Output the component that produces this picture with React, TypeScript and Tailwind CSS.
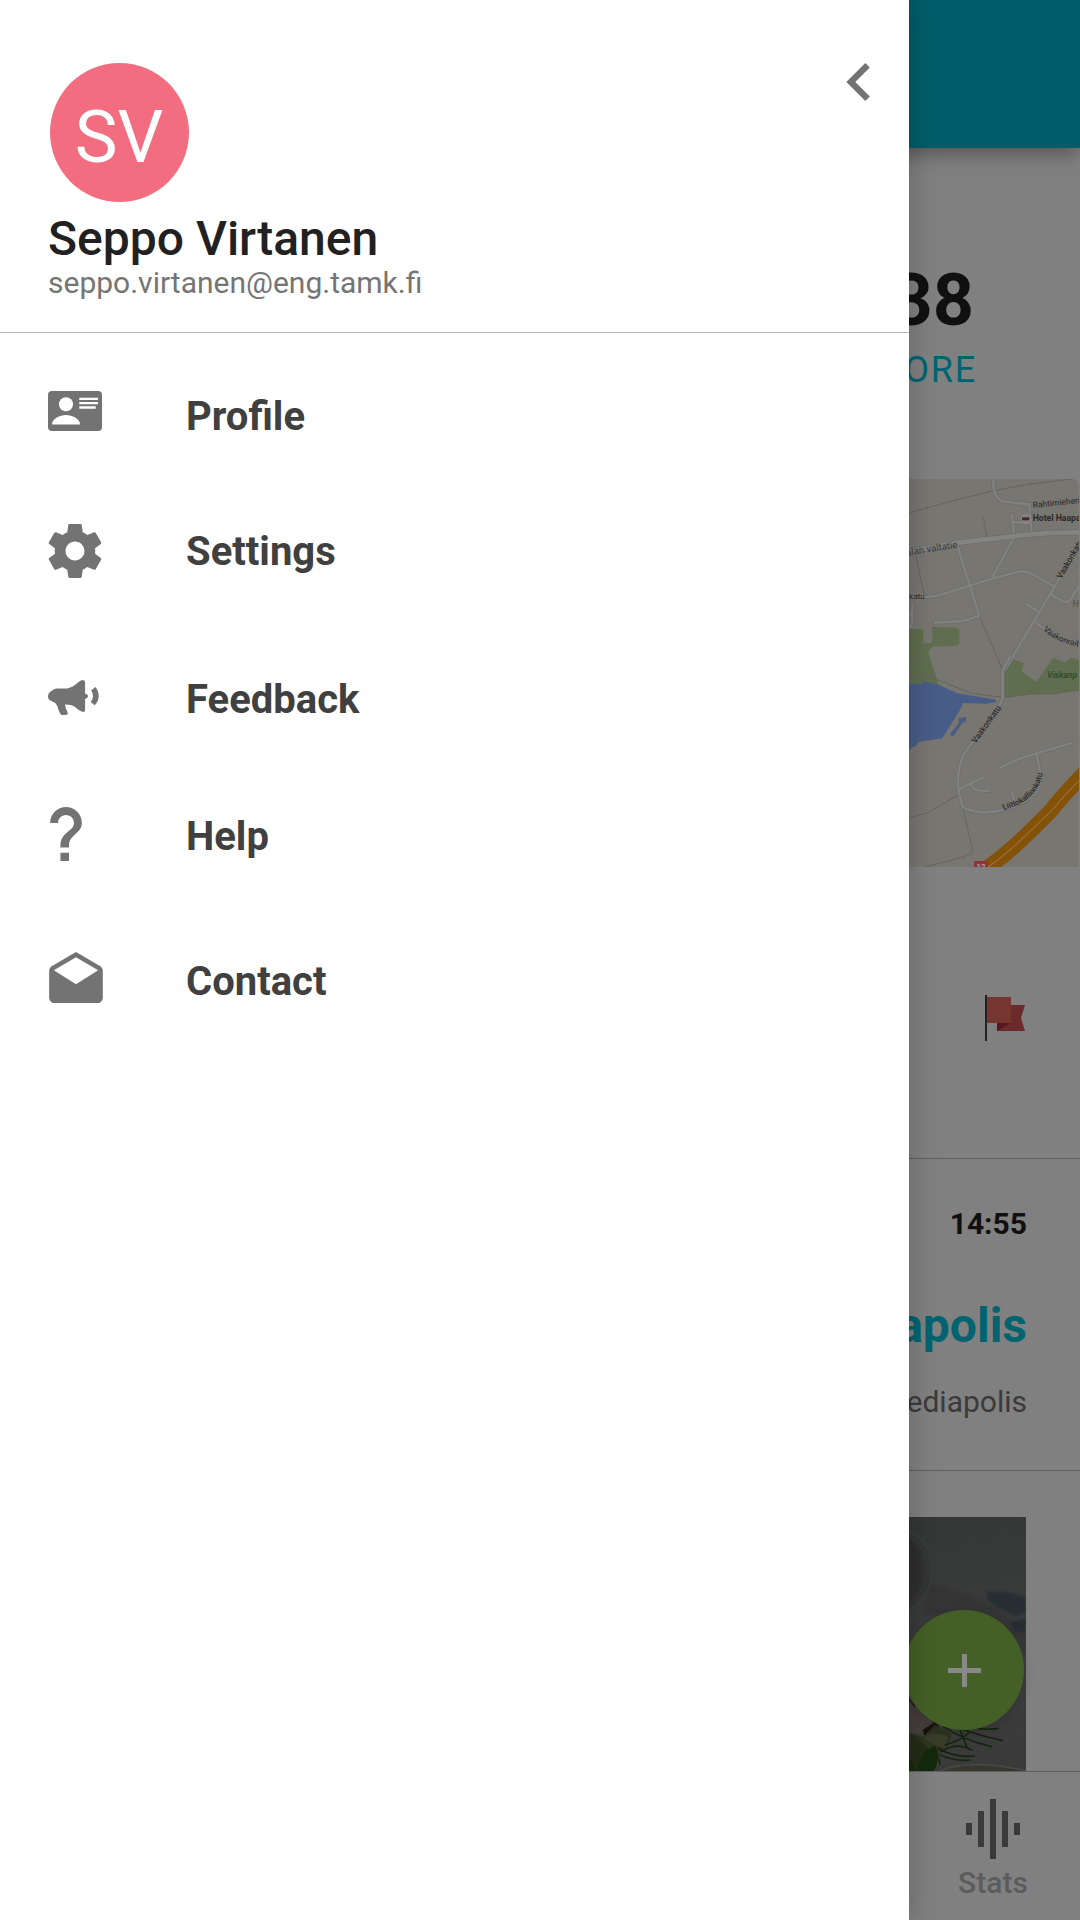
import React from "react";

function ProfileIcon() {
  return (
    <svg viewBox="0 0 54 40" className="mt-[7px] h-10 w-[54px] fill-[#737373]">
      <rect width="54" height="40" rx="4" />
      <circle cx="18" cy="13.3" r="7" fill="#fff" />
      <path d="M4 33.4c0-5.8 8-9.4 14-9.4s14 3.600 14 9.400z" fill="#fff" />
      <path d="M31.300 6.700H50V9H31.300zM31.300 11H50v2.300H31.300zM31.300 15.300H47.700v2.400H31.300z" fill="#fff" />
    </svg>
  );
}

function SettingsIcon() {
  return (
    <svg viewBox="2 2 20 20" className="mt-[5px] h-[54px] w-[54px] fill-[#737373]">
      <path d="M19.430 12.980c.04-.32.07-.64.07-.98s-.03-.66-.07-.98l2.110-1.650c.19-.15.24-.42.12-.64l-2-3.460c-.12-.22-.39-.3-.61-.22l-2.490 1c-.52-.4-1.080-.73-1.690-.98l-.38-2.650C14.460 2.180 14.250 2 14 2h-4c-.25 0-.46.18-.49.42l-.38 2.650c-.61.25-1.170.59-1.690.98l-2.490-1c-.23-.09-.49 0-.61.22l-2 3.460c-.13.22-.07.49.12.64l2.110 1.650c-.04.32-.07.65-.07.98s.03.66.07.98l-2.110 1.650c-.19.15-.24.42-.12.64l2 3.460c.12.22.39.3.61.22l2.490-1c.52.4 1.080.73 1.690.98l.38 2.650c.03.24.24.42.49.42h4c.25 0 .46-.18.49-.42l.38-2.650c.61-.25 1.170-.59 1.690-.98l2.490 1c.23.09.49 0 .61-.22l2-3.460c.12-.22.07-.49-.12-.64l-2.110-1.650zM12 15.500c-1.930 0-3.500-1.570-3.500-3.500s1.570-3.500 3.500-3.500 3.500 1.570 3.500 3.500-1.570 3.500-3.500 3.500z" />
    </svg>
  );
}

function FeedbackIcon() {
  return (
    <svg viewBox="0 0 154 105" className="mt-[13px] h-[35px] w-[51px] fill-[#737373]">
      <path d="M0 49C0 40 6 34 12 32Q17 26 25 25L58 25C78 22 86 9 98 2Q112-4 112 8V41Q120 41 121 49Q120 55 112 57V90Q111 99 102 95Q94 92 87 86C78 77 66 74 51 74L54 86Q60 98 60 102Q59 105 50 105L41 105Q37 104 35 98L31 88Q29 76 22 69L10 63Q0 60 0 49Z" />
      <path d="M143 21Q154 34 153 49Q152 66 141 76L129 66Q136 58 136 49Q136 38 130 31Z" />
    </svg>
  );
}

function HelpIcon() {
  return (
    <svg viewBox="8 6 8 13.600" className="mt-[3px] ml-[2px] h-[54px] w-8 fill-[#737373]">
      <path d="M12 6c-2.210 0-4 1.790-4 4h2c0-1.100.9-2 2-2s2 .9 2 2c0 .55-.22 1.050-.59 1.410l-1.240 1.100C11.200 13.300 10.600 14.300 10.600 15.600v.6h2.150v-.5c0-1.100.4-1.700 1.120-2.400l.9-.85C15.600 11.700 16 10.880 16 10c0-2.210-1.790-4-4-4zM10.600 17.500h2.150v2.100H10.600z" />
    </svg>
  );
}

function ContactIcon() {
  return (
    <svg viewBox="2 1 20 19" className="mt-[3px] ml-px h-[51px] w-[54px] fill-[#737373]">
      <path d="M21.990 8c0-.72-.37-1.350-.94-1.700L12 1 2.950 6.300C2.380 6.650 2 7.280 2 8v10c0 1.100.9 2 2 2h16c1.100 0 2-.9 2-2l-.01-10zM12 13L3.740 7.840 12 3l8.260 4.840L12 13z" />
    </svg>
  );
}

const menu = [
  { label: "Profile", icon: <ProfileIcon />, gap: "mt-[51px]" },
  { label: "Settings", icon: <SettingsIcon />, gap: "mt-[71px]" },
  { label: "Feedback", icon: <FeedbackIcon />, gap: "mt-[84px]" },
  { label: "Help", icon: <HelpIcon />, gap: "mt-[73px]" },
  { label: "Contact", icon: <ContactIcon />, gap: "mt-[81px]" },
];

function Drawer() {
  return (
    <aside className="relative z-10 flex w-[909px] shrink-0 flex-col bg-white shadow-[0_0_26px_rgba(0,0,0,0.24)]">
      <header className="flex h-[333px] justify-between border-b border-[#b5b5b5] pl-12">
        <div className="flex flex-col pt-[63px]">
          <div className="ml-[2px] flex h-[139px] w-[139px] items-center justify-center rounded-full bg-[#f36d80] pt-[10px] pr-px text-[72px] text-white">
            SV
          </div>
          <h1 className="mt-[9px] text-5xl leading-[56px] font-medium text-[#212121]">Seppo Virtanen</h1>
          <p className="-mt-[2px] text-3xl leading-9 text-[#757575]">seppo.virtanen@eng.tamk.fi</p>
        </div>
        <svg viewBox="0 0 24 24" className="mt-[44px] mr-[12px] h-[76px] w-[76px] fill-[#737373]">
          <path d="M15.410 7.410 14 6l-6 6 6 6 1.410-1.410L10.830 12z" />
        </svg>
      </header>
      <nav className="flex flex-col pl-12">
        {menu.map((m) => (
          <a key={m.label} className={`flex h-16 ${m.gap}`}>
            <span className="flex w-[138px] items-start">{m.icon}</span>
            <span className="text-[40px] leading-[66px] font-bold text-[#404040]">{m.label}</span>
          </a>
        ))}
      </nav>
    </aside>
  );
}

const minorRoads = [
  "M340 20V45Q345 92 375 95L448 103",
  "M448 103L455 190M395 133L401 190M398 157H445",
  "M232 228L298 437L250 453L165 458",
  "M60 375Q110 385 170 378L335 326L400 205",
  "M335 326L415 305Q440 301 460 314L522 350",
  "M620 190L374 600",
  "M512 372L548 394Q570 402 580 375L610 330M437 402L475 424M465 455Q500 490 610 522",
  "M97 400V462Q92 474 80 470M80 432H97",
];
const southRoads = [
  "M390 -10L368 32V110Q362 150 275 250C240 290 230 340 235 390L248 442Q310 470 375 447Q490 415 482 345L470 282",
  "M360 324Q400 300 470 280L574 249M235 390L270 370L308 353M270 370Q282 392 300 391L328 393M395 397L402 416",
];

function Roads({ paths }: { paths: string[] }) {
  return (
    <g fill="none" strokeLinecap="round" strokeLinejoin="round">
      {paths.map((d) => (
        <path key={d} d={d} stroke="#6d6c69" strokeWidth="12" />
      ))}
      {paths.map((d) => (
        <path key={d} d={d} stroke="#80807e" strokeWidth="8" />
      ))}
    </g>
  );
}

function MapTile() {
  return (
    <svg viewBox="0 0 510 1164" className="h-[388px] w-[170px] rounded-tr-lg bg-[#787671]" fontFamily="Roboto, sans-serif" fill="#292929">
      <g transform="translate(-87 -27)">
        <path d="M80 477H130V520L152 521L158 505L154 470L230 473Q238 475 238 482V520Q236 527 228 527L160 530Q144 535 146 552L175 640Q180 655 172 645L80 650Z" fill="#5f6e4f" />
        <path d="M378 600L400 568L432 580L425 605L470 635L520 563L553 577L575 563L600 572V660L520 672L455 673L370 685V610Z" fill="#5f6e4f" />
        <path d="M80 130L230 90L340 62L450 42L600 24M140 108v8M230 86v8M320 63v8M450 38v8M310 142L320 198M108 260L133 378M298 437L368 602M80 600L122 546" fill="none" stroke="#65645f" strokeWidth="3" />
        <Roads paths={minorRoads} />
        <path d="M80 246L235 218L400 199Q500 185 610 188" fill="none" stroke="#6d6c69" strokeWidth="18" />
        <path d="M80 246L235 218L400 199Q500 185 610 188" fill="none" stroke="#838382" strokeWidth="14" />
        <circle cx="438" cy="147" r="16" fill="#858585" />
        <path d="M426 142h22v9h-22z" fill="#4d2520" />
      </g>
      <g transform="translate(-87 543)">
        <path d="M80 72L125 71L130 64L175 74L232 100L330 116L348 119V127L318 131L250 129L240 150L187 235L115 246L108 258L97 262L80 280Z" fill="#475c86" />
        <path d="M235 175L258 171V184L247 188L222 226Q214 231 210 222L237 188Z" fill="#475c86" />
        <path d="M80 43L150 50L275 100L368 112M368 32L355 0M368 112L455 102L524 102L600 88M524 102L558 60M80 477L145 457L235 405M248 442L278 570Q278 580 255 590L130 622" fill="none" stroke="#65645f" strokeWidth="3" />
        <Roads paths={southRoads} />
        <path d="M320 625Q390 575 465 500L510 455Q550 405 620 332" fill="none" stroke="#855209" strokeWidth="46" />
        <path d="M320 625Q390 575 475 490L520 447Q560 395 620 340" fill="none" stroke="#a08148" strokeWidth="3" />
        <rect x="282" y="603" width="42" height="30" fill="#8c3438" />
        <text x="289" y="627" fontSize="24" fontWeight="700" fill="#a9a3a3">12</text>
        <text x="501" y="54" fontSize="26" fontStyle="italic" fontWeight="500" fill="#2d4a2b">Viskanp</text>
        <text transform="translate(287 251) rotate(-54)" fontSize="25" fontWeight="500">Vaakonkatu</text>
        <path id="curve-a" d="M370 450Q487 420 488 325" fill="none" />
        <text fontSize="24" fontWeight="500"><textPath href="#curve-a">Liittokallionkatu</textPath></text>
      </g>
      <g transform="translate(-87 -27)">
        <text transform="translate(80 257) rotate(-9)" fontSize="29" fill="#3b3b3a">alan valtatie</text>
        <text transform="translate(459 114) rotate(-6)" fontSize="25.500">Rahtimiehenk</text>
        <text x="458" y="153" fontSize="26" fontWeight="700">Hotel Haapa</text>
        <text x="88" y="388" fontSize="24">katu</text>
        <text transform="translate(544 328) rotate(-60)" fontSize="25" fontWeight="500">Vaakonkatu</text>
        <path id="curve-b" d="M489 480Q530 520 620 534" fill="none" />
        <text fontSize="25"><textPath href="#curve-b">Vaakonrait</textPath></text>
        <text x="578" y="412" fontSize="25" fontStyle="italic" fill="#55493a">H</text>
      </g>
    </svg>
  );
}

function Flag() {
  return (
    <svg viewBox="0 0 40 46" className="h-[46px] w-10">
      <path d="M12 10H40L36 23L40 36H12Z" fill="#6c2a2b" />
      <path d="M12 36V28H26Z" fill="#57191d" />
      <path d="M2 2H26V28H2Z" fill="#773530" />
      <path d="M0 0H2V46H0Z" fill="#222" />
    </svg>
  );
}

function Photo() {
  return (
    <svg viewBox="0 0 351 762" className="h-[254px] w-[117px]">
      <defs>
        <linearGradient id="table" x1="0" y1="0" x2="0.100" y2="1">
          <stop offset="0" stopColor="#353737" />
          <stop offset="0.300" stopColor="#383939" />
          <stop offset="0.600" stopColor="#3e3e40" />
          <stop offset="1" stopColor="#3a3a3b" />
        </linearGradient>
        <filter id="soft"><feGaussianBlur stdDeviation="5" /></filter>
      </defs>
      <rect width="351" height="762" fill="url(#table)" />
      <g transform="translate(-87 -51)">
        <ellipse cx="50" cy="210" rx="106" ry="125" fill="#343636" stroke="#3d3f3f" strokeWidth="4" />
        <ellipse cx="48" cy="210" rx="85" ry="108" fill="#2f2f2e" filter="url(#soft)" />
        <path d="M150 250Q240 270 320 310T450 420L438 460L330 380L130 340Z" fill="#303133" opacity="0.600" filter="url(#soft)" />
        <path d="M320 275Q370 270 440 290V340L405 352L380 338L350 320L322 300ZM390 362L440 355V400L400 395Z" fill="#282f32" filter="url(#soft)" />
        <path d="M80 590L160 650L150 700L87 700Z" fill="#453f3d" />
        <path d="M80 590L105 620M130 690L165 668L175 680L135 705Z" stroke="#1a1b10" strokeWidth="4" fill="#1c120c" />
        <path d="M87 700L130 710L165 675L215 700L205 740L160 775L120 813H87Z" fill="#2d3420" />
        <path d="M130 715Q155 690 205 710L195 745L165 735Z" fill="#3a3c2c" />
        <path d="M95 700L150 750L120 813L87 800Z" fill="#252b18" />
        <path d="M115 813Q115 760 160 738Q185 780 160 813Z" fill="#122a0b" />
        <path d="M80 765L112 813H80Z" fill="#152d0b" />
        <path d="M190 680Q250 720 335 740M210 675Q290 705 368 722M230 670Q300 695 355 685M185 755Q230 725 275 750M175 745Q225 775 283 768M180 765Q230 785 270 780M195 735Q245 720 265 700M165 740L180 792M240 690L262 745" fill="none" stroke="#14260e" strokeWidth="5" strokeLinecap="round" />
        <path d="M180 813Q270 775 440 813" fill="#37352f" stroke="#484744" strokeWidth="5" />
      </g>
    </svg>
  );
}

function Page() {
  return (
    <main className="relative flex w-[171px] flex-col overflow-hidden bg-[#808080] whitespace-nowrap">
      <div className="-ml-6 h-[148px] shrink-0 bg-[#005d69] shadow-[0_8px_18px_-2px_rgba(0,0,0,0.34)]" />
      <section className="flex h-[331px] shrink-0 flex-col items-end pt-[117px]">
        <strong className="mr-[106px] text-[72px] leading-[72px] font-bold text-[#101010]">38</strong>
        <span className="mt-[11px] mr-[103px] text-4xl leading-[44px] tracking-[0.05em] text-[#006470]">ORE</span>
      </section>
      <MapTile />
      <section className="flex h-[291px] shrink-0 items-start justify-end pt-[128px] pr-[55px]">
        <Flag />
      </section>
      <section className="flex h-[312px] shrink-0 flex-col items-end border-t border-[#5f5f5f] pt-[47px] pr-[53px]">
        <time className="text-3xl leading-9 font-bold text-[#101010]">14:55</time>
        <strong className="mt-[56px] text-5xl leading-[56px] font-bold text-[#006470]">apolis</strong>
        <span className="mt-[30px] text-3xl leading-9 text-[#3a3a3a]">ediapolis</span>
      </section>
      <section className="h-[301px] shrink-0 border-t border-[#5f5f5f] pt-[46px]">
        <Photo />
      </section>
      <button className="absolute top-[1610px] left-[-5px] flex h-[120px] w-[120px] items-center justify-center rounded-full bg-[#446026] shadow-[0_4px_14px_rgba(0,0,0,0.15)]">
        <svg viewBox="0 0 33 33" className="h-[33px] w-[33px] fill-[#888]">
          <path d="M14 0H19V14H33V19H19V33H14V19H0V14H14Z" />
        </svg>
      </button>
      <footer className="flex h-[149px] shrink-0 flex-col items-center border-t border-[#5f5f5f] bg-[#808080] pt-[27px] pr-[3px]">
        <svg viewBox="0 0 54 60" className="h-[60px] w-[54px] fill-[#3a3a3a]">
          <path d="M0 24h6v12H0zM12 12h6v36h-6zM24 0h6v60h-6zM36 12h6v36h-6zM48 24h6v12h-6z" />
        </svg>
        <span className="mt-[6px] text-3xl leading-9 font-medium text-[#5c5c5c]">Stats</span>
      </footer>
    </main>
  );
}

export default function App() {
  return (
    <div className="flex h-[1920px] w-[1080px] overflow-hidden bg-[#808080] font-[Roboto,sans-serif]">
      <Drawer />
      <Page />
    </div>
  );
}
